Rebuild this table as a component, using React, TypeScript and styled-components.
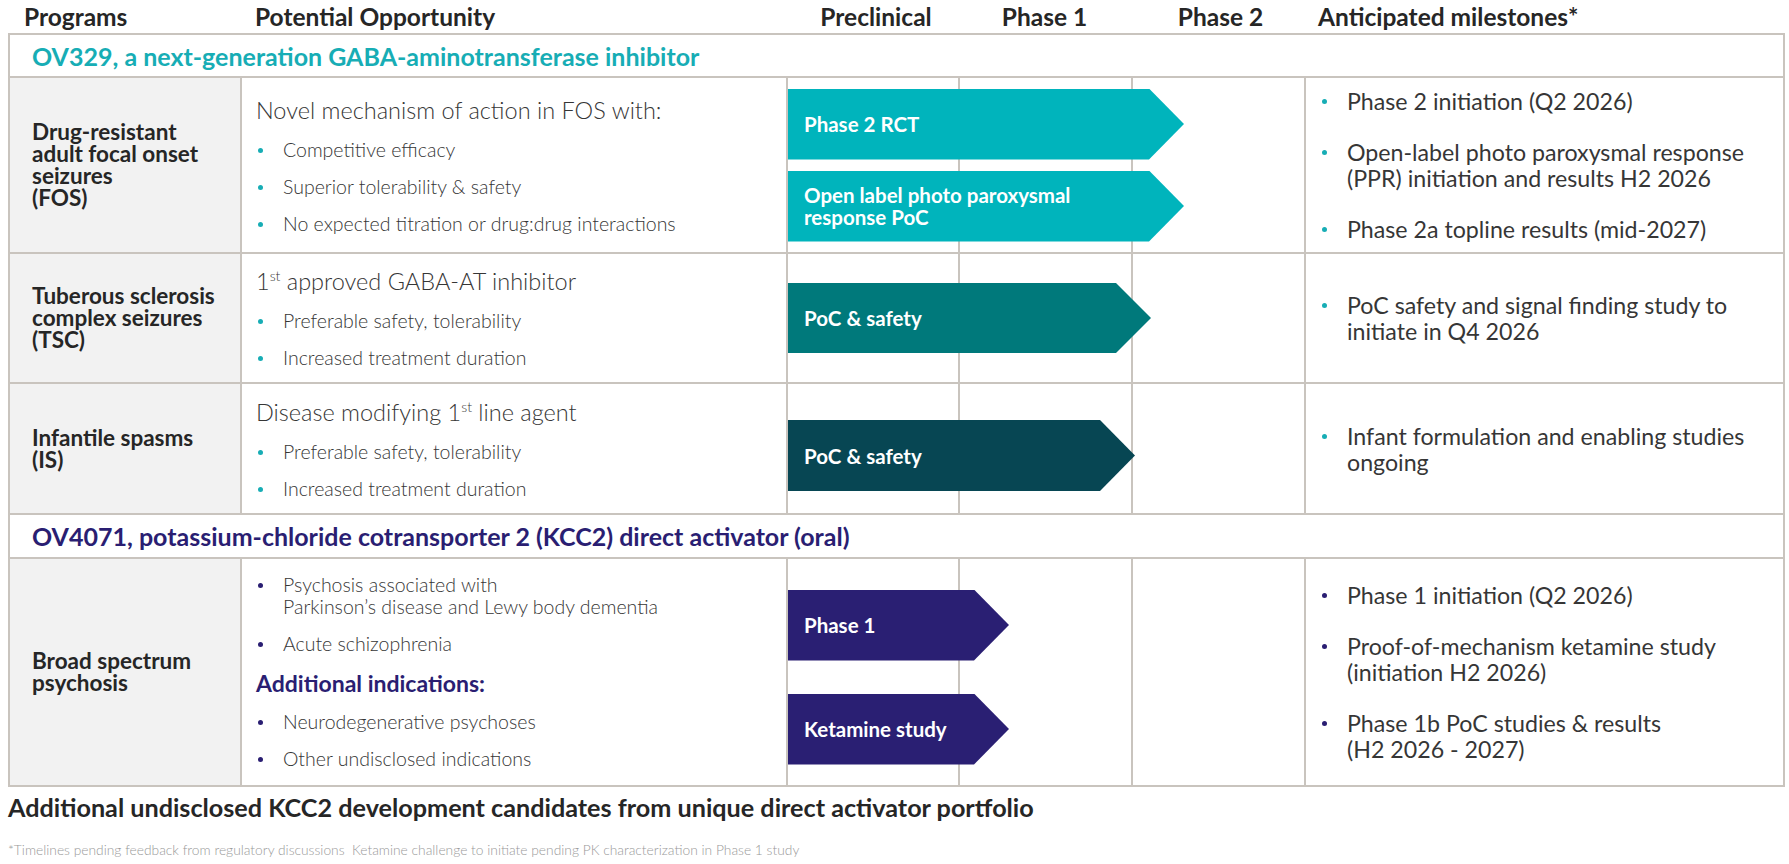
import React from 'react';
import styled, { createGlobalStyle } from 'styled-components';

const LINE = '#c9c4be';
const TEAL = '#17adb5';
const INDIGO = '#2a1e72';
const INK = '#262626';
const BODY = '#363636';

const GlobalStyle = createGlobalStyle`
  html, body {
    margin: 0;
    padding: 0;
    background: #ffffff;
  }
  body {
    font-family: Lato, "Open Sans", "Liberation Sans", sans-serif;
    color: ${INK};
  }
  * {
    box-sizing: border-box;
  }
  ul {
    margin: 0;
    padding: 0;
    list-style: none;
  }
`;

const Page = styled.div`
  width: 1789px;
  height: 864px;
  padding-left: 8px;
  overflow: hidden;
`;

const HeaderRow = styled.div`
  display: grid;
  grid-template-columns: 232px 546px 172px 173px 173px 481px;
  align-items: center;
  height: 33px;
  font-size: 24.5px;
  font-weight: 700;
  color: ${INK};
`;

const HeaderCell = styled.div<{ $center?: boolean; $pad?: number }>`
  white-space: nowrap;
  text-align: ${p => (p.$center ? 'center' : 'left')};
  padding-left: ${p => p.$pad ?? 0}px;
`;

const Table = styled.div`
  width: 1777px;
  border: 2px solid ${LINE};
`;

const SectionRow = styled.div<{ $color: string; $height: number; $first?: boolean }>`
  display: flex;
  align-items: center;
  height: ${p => p.$height}px;
  padding-left: 22px;
  border-top: ${p => (p.$first ? 'none' : `2px solid ${LINE}`)};
  font-size: 25px;
  font-weight: 700;
  color: ${p => p.$color};
  white-space: nowrap;
`;

const ProgramRow = styled.div<{ $height: number }>`
  display: grid;
  grid-template-columns: 230px 546px 518px 1fr;
  height: ${p => p.$height}px;
  border-top: 2px solid ${LINE};
`;

const ProgramCell = styled.div`
  display: flex;
  align-items: center;
  padding-left: 22px;
  background: #f2f2f2;
  font-size: 22.5px;
  font-weight: 700;
  line-height: 22px;
  color: ${INK};
  white-space: pre;
`;

const OpportunityCell = styled.div`
  display: flex;
  flex-direction: column;
  justify-content: center;
  padding-left: 14px;
  border-left: 2px solid ${LINE};
  color: ${BODY};
`;

const OpportunityTitle = styled.div`
  font-size: 23.5px;
  font-weight: 300;
  line-height: 28px;
  margin-bottom: 15px;
  white-space: nowrap;
`;

const SubTitle = styled.div`
  font-size: 23px;
  font-weight: 700;
  line-height: 26px;
  color: ${INDIGO};
  margin: 15px 0 15px;
`;

const Sup = styled.sup`
  font-size: 14px;
  line-height: 0;
  vertical-align: 9px;
`;

const BulletList = styled.ul<{ $gap: number }>`
  display: flex;
  flex-direction: column;
  gap: ${p => p.$gap}px;
`;

const Bullet = styled.li<{ $dot: string; $lh: number; $size: number; $indent: number; $weight: number }>`
  display: flex;
  font-size: ${p => p.$size}px;
  font-weight: ${p => p.$weight};
  line-height: ${p => p.$lh}px;
  white-space: pre;

  &::before {
    content: '';
    flex: 0 0 5px;
    width: 5px;
    height: 5px;
    border-radius: 50%;
    background: ${p => p.$dot};
    margin-top: ${p => p.$lh / 2 - 2}px;
    margin-left: ${p => p.$indent}px;
    margin-right: 20px;
  }
`;

const PhaseCell = styled.div<{ $gap: number; $shift?: number }>`
  display: flex;
  flex-direction: column;
  justify-content: center;
  gap: ${p => p.$gap}px;
  padding-top: ${p => p.$shift ?? 0}px;
  border-left: 2px solid ${LINE};
  background:
    linear-gradient(${LINE}, ${LINE}) no-repeat 170px 0 / 2px 100%,
    linear-gradient(${LINE}, ${LINE}) no-repeat 343px 0 / 2px 100%;
`;

const Arrow = styled.div<{ $color: string; $width: number; $height: number }>`
  display: flex;
  align-items: center;
  width: ${p => p.$width}px;
  height: ${p => p.$height}px;
  padding: 0 40px 0 16px;
  background: ${p => p.$color};
  clip-path: polygon(0 0, calc(100% - 35px) 0, 100% 50%, calc(100% - 35px) 100%, 0 100%);
  color: #ffffff;
  font-size: 20.5px;
  font-weight: 700;
  line-height: 22px;
  white-space: pre;
`;

const MilestoneCell = styled.div`
  display: flex;
  flex-direction: column;
  justify-content: center;
  padding-left: 16px;
  border-left: 2px solid ${LINE};
  color: ${BODY};
`;

const Closing = styled.div`
  margin-top: 6px;
  font-size: 25.2px;
  font-weight: 700;
  line-height: 28px;
  color: ${INK};
`;

const Footnote = styled.div`
  margin-top: 20px;
  font-size: 13.8px;
  font-weight: 300;
  line-height: 17px;
  color: #999999;
  white-space: pre;
`;

type Program = {
  name: string;
  height: number;
  title?: React.ReactNode;
  bullets: string[];
  extraTitle?: string;
  extraBullets?: string[];
  arrows: { label: string; width: number }[];
  arrowColor: string;
  arrowHeight: number;
  arrowGap: number;
  arrowShift?: number;
  dot: string;
  milestones: string[];
};

const gabaPrograms: Program[] = [
  {
    name: 'Drug-resistant\nadult focal onset\nseizures\n(FOS)',
    height: 176,
    title: 'Novel mechanism of action in FOS with:',
    bullets: [
      'Competitive efficacy',
      'Superior tolerability & safety',
      'No expected titration or drug:drug interactions',
    ],
    arrows: [
      { label: 'Phase 2 RCT', width: 396 },
      { label: 'Open label photo paroxysmal\nresponse PoC', width: 396 },
    ],
    arrowColor: '#00b4bc',
    arrowHeight: 71,
    arrowGap: 11,
    dot: TEAL,
    milestones: [
      'Phase 2 initiation (Q2 2026)',
      'Open-label photo paroxysmal response\n(PPR) initiation and results H2 2026',
      'Phase 2a topline results (mid-2027)',
    ],
  },
  {
    name: 'Tuberous sclerosis\ncomplex seizures\n(TSC)',
    height: 130,
    title: (
      <>
        1<Sup>st</Sup> approved GABA-AT inhibitor
      </>
    ),
    bullets: ['Preferable safety, tolerability', 'Increased treatment duration'],
    arrows: [{ label: 'PoC & safety', width: 363 }],
    arrowColor: '#00797b',
    arrowHeight: 70,
    arrowGap: 0,
    dot: TEAL,
    milestones: ['PoC safety and signal finding study to\ninitiate in Q4 2026'],
  },
  {
    name: 'Infantile spasms\n(IS)',
    height: 131,
    title: (
      <>
        Disease modifying 1<Sup>st</Sup> line agent
      </>
    ),
    bullets: ['Preferable safety, tolerability', 'Increased treatment duration'],
    arrows: [{ label: 'PoC & safety', width: 347 }],
    arrowColor: '#074653',
    arrowHeight: 71,
    arrowGap: 0,
    arrowShift: 14,
    dot: TEAL,
    milestones: ['Infant formulation and enabling studies\nongoing'],
  },
];

const kccPrograms: Program[] = [
  {
    name: 'Broad spectrum\npsychosis',
    height: 228,
    bullets: ['Psychosis associated with\nParkinson’s disease and Lewy body dementia', 'Acute schizophrenia'],
    extraTitle: 'Additional indications:',
    extraBullets: ['Neurodegenerative psychoses', 'Other undisclosed indications'],
    arrows: [
      { label: 'Phase 1', width: 221 },
      { label: 'Ketamine study', width: 221 },
    ],
    arrowColor: '#2a1f73',
    arrowHeight: 71,
    arrowGap: 33,
    arrowShift: 10,
    dot: INDIGO,
    milestones: [
      'Phase 1 initiation (Q2 2026)',
      'Proof-of-mechanism ketamine study\n(initiation H2 2026)',
      'Phase 1b PoC studies & results\n(H2 2026 - 2027)',
    ],
  },
];

const OpportunityBullets = ({ items, dot }: { items: string[]; dot: string }) => (
  <BulletList $gap={15}>
    {items.map((item, i) => (
      <Bullet key={i} $dot={dot} $lh={22} $size={19.5} $indent={2} $weight={300}>
        <span>{item}</span>
      </Bullet>
    ))}
  </BulletList>
);

const ProgramLine = ({ p }: { p: Program }) => (
  <ProgramRow $height={p.height}>
    <ProgramCell>
      <div>{p.name}</div>
    </ProgramCell>

    <OpportunityCell>
      {p.title && <OpportunityTitle>{p.title}</OpportunityTitle>}
      <OpportunityBullets items={p.bullets} dot={p.dot} />
      {p.extraTitle && <SubTitle>{p.extraTitle}</SubTitle>}
      {p.extraBullets && <OpportunityBullets items={p.extraBullets} dot={p.dot} />}
    </OpportunityCell>

    <PhaseCell $gap={p.arrowGap} $shift={p.arrowShift}>
      {p.arrows.map((a, i) => (
        <Arrow key={i} $color={p.arrowColor} $width={a.width} $height={p.arrowHeight}>
          <span>{a.label}</span>
        </Arrow>
      ))}
    </PhaseCell>

    <MilestoneCell>
      <BulletList $gap={25}>
        {p.milestones.map((m, i) => (
          <Bullet key={i} $dot={p.dot} $lh={26} $size={23.2} $indent={0} $weight={400}>
            <span>{m}</span>
          </Bullet>
        ))}
      </BulletList>
    </MilestoneCell>
  </ProgramRow>
);

const App = () => {
  return (
    <Page>
      <GlobalStyle />
      <HeaderRow>
        <HeaderCell $pad={16}>Programs</HeaderCell>
        <HeaderCell $pad={15}>Potential Opportunity</HeaderCell>
        <HeaderCell $center $pad={8}>Preclinical</HeaderCell>
        <HeaderCell $center>Phase 1</HeaderCell>
        <HeaderCell $center $pad={6}>Phase 2</HeaderCell>
        <HeaderCell $pad={14}>Anticipated milestones*</HeaderCell>
      </HeaderRow>

      <Table>
        <SectionRow $first $height={41} $color={TEAL}>
          OV329, a next-generation GABA-aminotransferase inhibitor
        </SectionRow>
        {gabaPrograms.map((p, i) => (
          <ProgramLine key={i} p={p} />
        ))}
        <SectionRow $height={44} $color={INDIGO}>
          OV4071, potassium-chloride cotransporter 2 (KCC2) direct activator (oral)
        </SectionRow>
        {kccPrograms.map((p, i) => (
          <ProgramLine key={i} p={p} />
        ))}
      </Table>

      <Closing>Additional undisclosed KCC2 development candidates from unique direct activator portfolio</Closing>
      <Footnote>
        {'*Timelines pending feedback from regulatory discussions  Ketamine challenge to initiate pending PK characterization in Phase 1 study'}
      </Footnote>
    </Page>
  );
};

export default App;
